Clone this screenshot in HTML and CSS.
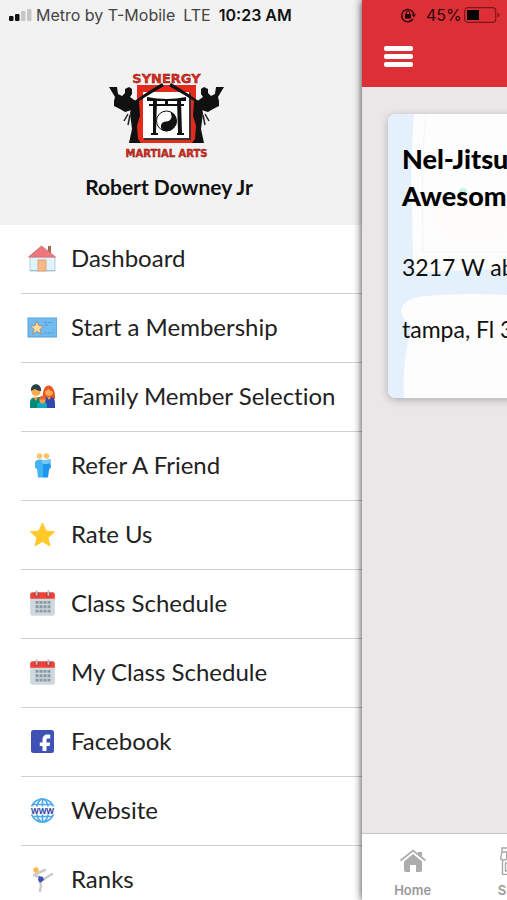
FILE: index.html
```html
<!DOCTYPE html>
<html lang="en">
<head>
<meta charset="utf-8">
<meta name="viewport" content="width=device-width, initial-scale=1">
<title>Synergy Martial Arts</title>
<link rel="stylesheet" href="styles.css">
</head>
<body>
<svg class="defs" width="0" height="0" aria-hidden="true">
  <symbol id="calendar" viewBox="0 0 28 28">
    <path d="M3 9h23v15a2 2 0 0 1-2 2H5a2 2 0 0 1-2-2z" fill="#cfd8dc"/>
    <path d="M5 4h19a2 2 0 0 1 2 2v4H3V6a2 2 0 0 1 2-2z" fill="#ee4338"/>
    <circle cx="9" cy="6" r="2.200" fill="#b62d2a"/><circle cx="20" cy="6" r="2.200" fill="#b62d2a"/>
    <path d="M9 3v3.500M20 3v3.500" stroke="#b6c2c8" stroke-width="2" stroke-linecap="round"/>
    <path d="M8 13.500h14M8 17.500h14M8 21.500h14" stroke="#8799a3" stroke-width="2.600" stroke-dasharray="2.800 .9"/>
  </symbol>
</svg>
<div class="app">
  <aside class="drawer">
    <header class="profile">
      <div class="status">
        <svg class="signal" viewBox="0 0 24 12" aria-hidden="true">
          <rect x="0" y="7" width="4.500" height="5" rx="1" fill="#111"/><rect x="6" y="5" width="4.500" height="7" rx="1" fill="#111"/>
          <rect x="12" y="2" width="4.500" height="10" rx="1" fill="#c6c6c6"/><rect x="18" y="0" width="4.500" height="12" rx="1" fill="#c6c6c6"/>
        </svg>
        <span class="carrier">Metro by T-Mobile</span>
        <span class="network">LTE</span>
        <span class="clock">10:23 AM</span>
      </div>
      <svg class="logo" viewBox="0 0 124 90" role="img" aria-label="Synergy Martial Arts">
        <rect x="33" y="15" width="59" height="58" fill="#e42a1c"/>
        <rect x="40" y="23" width="47" height="47" fill="#333"/>
        <rect x="39" y="22" width="46" height="46" fill="#fff"/>
        <g fill="#111">
          <path d="M43 27q20 4 39 0v4H43zM45 34h35v2H45zM49 30h4l-1 33h2v2h-7v-2h2zM73 30h4l1 33h2v2h-7v-2h1zM61 29h3v6h-3z"/>
          <g id="fighter">
            <path d="M58 13l2 3-17 10-8 5 1 15-3 10 1 13 3 4H25l3-14-2-16 3-11 13-9z"/>
            <path d="M5 17h8l1 7 4 2 3-3 0-4 4-2 3 2v5l-2 3 7 5-5 8-7 2-5-3-6-3 0-5 1-4z"/>
            <path d="M24 44l-4 7M26 45l-2 10" stroke="#222" stroke-width="1.500" fill="none"/>
          </g>
          <use href="#fighter" transform="matrix(-1 0 0 1 125 0)"/>
        </g>
        <circle cx="62.500" cy="51" r="10" fill="#fff" stroke="#111"/>
        <path d="M66 41.500a10 10 0 0 1-7 19c-4-3-2-9 3-9s7-5 4-10z" fill="#111"/>
        <circle cx="66" cy="47" r="1.500" fill="#fff"/><circle cx="59" cy="55" r="1.500" fill="#111"/>
        <text class="logo-text" x="62.500" y="13" text-anchor="middle">SYNERGY</text>
        <text class="logo-text logo-base" x="62.500" y="87" text-anchor="middle">MARTIAL ARTS</text>
      </svg>
      <h1 class="name">Robert Downey Jr</h1>
    </header>
    <nav class="menu">
      <a href="#" class="item"><svg class="icon" viewBox="0 0 30 30" aria-hidden="true">
        <path d="M21 3h3v8h-3z" fill="#a06b53"/><path d="M3 14h25v14H3z" fill="#dff3fb" stroke="#b3d0dc"/><path d="M3 27.500h25" stroke="#9fc1d0"/>
        <path d="M1.500 14L14.500 3 28.500 14z" fill="#ed787c" stroke="#dc7378"/><rect x="11" y="17" width="8" height="11" fill="#f8b886" stroke="#dfa47f"/></svg>Dashboard</a>
      <a href="#" class="item"><svg class="icon" viewBox="0 0 30 30" aria-hidden="true">
        <rect x="1" y="6" width="29" height="19" fill="#70bbf0" stroke="#5a9fd6"/><path d="M10 9l2 4.500 4.500.5-3.500 3.500 1.500 4.500-4.500-2.500L5.500 22 7 17.500 3.500 14l4.500-.5z" fill="#ffdca0" stroke="#a08a80"/>
        <path d="M17 10.500h9M18 13h4M17 21h10" stroke="#5596d2" stroke-dasharray="3 1"/></svg>Start a Membership</a>
      <a href="#" class="item"><svg class="icon" viewBox="0 0 30 30" aria-hidden="true">
        <path d="M16 18c-2-18 13-18 12 0z" fill="#ee5020"/><path d="M3 27v-6q0-4 5-5h5l4 4v7z" fill="#058a76"/><path d="M15 27v-7l4-4h5q4 1 4 6v5z" fill="#3146ae"/>
        <circle cx="9" cy="10.500" r="4.500" fill="#ffa94d"/><path d="M4 10c-1-9 11-9 10 0-4 0-5-2-6-2z" fill="#284047"/><path d="M6 16h5l-2 4zM20 16h4l-2 3z" fill="#ff9e45"/>
        <circle cx="22" cy="11" r="4" fill="#ffad51"/><path d="M17 11c0-8 9-8 10 0-5-1-5-3-5-3z" fill="#ef5525"/>
        <path d="M10 27v-3q0-3 5-3t5 3v3z" fill="#16a8c2"/><circle cx="15.500" cy="19.500" r="3" fill="#ff9f4b"/><path d="M12 18.500c0-5 7-5 7 0z" fill="#e66a2c"/></svg>Family Member Selection</a>
      <a href="#" class="item"><svg class="icon" viewBox="0 0 30 30" aria-hidden="true">
        <circle cx="12.500" cy="6" r="2.800" fill="#ffc469"/><circle cx="19.500" cy="6" r="2.800" fill="#ffc469"/>
        <path d="M10 10q3-1 6 0v17.500h-5l-1-8.500-2-1v-6z" fill="#45b3f2"/><path d="M16 11q4-2 7 0l1 6-2 3-1 7.500h-5z" fill="#1e96ed"/><path d="M15 10q4 1 6-1l3 .5v3q-5 3-9 1z" fill="#74c7f9"/></svg>Refer A Friend</a>
      <a href="#" class="item"><svg class="icon" viewBox="0 0 30 30" aria-hidden="true">
        <path d="M15.500 4l3.500 8 8.500.8-6.500 6 2 8.200-7.500-4.500L8 27l2-8.200-6.500-6 8.500-.8z" fill="#ffca28" stroke="#ffca28" stroke-linejoin="round"/></svg>Rate Us</a>
      <a href="#" class="item"><svg class="icon" aria-hidden="true"><use href="#calendar"/></svg>Class Schedule</a>
      <a href="#" class="item"><svg class="icon" aria-hidden="true"><use href="#calendar"/></svg>My Class Schedule</a>
      <a href="#" class="item"><svg class="icon" viewBox="0 0 30 30" aria-hidden="true">
        <rect x="4" y="4" width="23" height="23" rx="2.500" fill="#3f51b5"/><path d="M23.300 12.500H21c-1.200 0-1.500.5-1.500 1.500v2.500h3.700l-.6 3.500h-3.100v5h-4v-5h-2.700v-3.500h2.700v-3c0-3 1.700-5 5-5 1.500 0 2.200.1 2.800.2z" fill="#fff"/></svg>Facebook</a>
      <a href="#" class="item"><svg class="icon" viewBox="0 0 30 30" aria-hidden="true">
        <g fill="none" stroke="#4ca9e9" stroke-width="1.700"><circle cx="15.500" cy="15.500" r="11.500"/><ellipse cx="15.500" cy="15.500" rx="6" ry="11.500"/><path d="M15.500 4v23M5.500 9.500h20M5.500 21.500h20"/></g>
        <path d="M2 11.500h27v8H2z" fill="#fff"/><text class="www" x="15.500" y="18.500" text-anchor="middle">WWW</text></svg>Website</a>
      <a href="#" class="item"><svg class="icon" viewBox="0 0 30 30" aria-hidden="true">
        <g fill="none" stroke="#cfcacb" stroke-width="2.500" stroke-linecap="round" stroke-linejoin="round"><path d="M12 13l-5-2 11-5M13 16l1 6-1 5M14 17l11-7"/></g>
        <path d="M12 12l4 1 1 3-4 3-2-3z" fill="#3f51b5"/><circle cx="9" cy="6" r="2.700" fill="#ffb74d"/></svg>Ranks</a>
    </nav>
  </aside>
  <main class="page">
    <header class="topbar">
      <div class="power">
        <svg class="lock" viewBox="0 0 16 16" aria-hidden="true"><path d="M13 12a6.200 6.200 0 1 1 1-3" fill="none" stroke="#2e0808" stroke-width="1.400"/><path d="M11.500 7.500h4.500l-2.200 3z" fill="#2e0808"/><rect x="5" y="7" width="6" height="4.500" fill="#1d0303"/><path d="M6.300 7V5.500a1.700 1.700 0 0 1 3.400 0V7" fill="none" stroke="#1d0303"/></svg>
        <span>45%</span>
        <svg class="battery" viewBox="0 0 36 16" aria-hidden="true"><rect x=".7" y=".7" width="31" height="14.600" rx="3" fill="none" stroke="#80171b" stroke-width="1.200"/><rect x="3" y="3" width="12" height="10" fill="#000"/><path d="M33.500 5.500q2 .5 2 2.500t-2 2.500z" fill="#80171b"/></svg>
      </div>
      <button class="burger" type="button" aria-label="Menu"><span></span><span></span><span></span></button>
    </header>
    <section class="content">
      <article class="card">
        <svg class="map" viewBox="0 0 455 284" preserveAspectRatio="xMinYMin slice" aria-hidden="true">
          <rect width="455" height="284" fill="#fdfdfd"/>
          <path d="M0 0h26q-4 50-2 90l1 68q15 0 35-1 30-2 60-2v26q-50-3-90 2-16 4-17 14 3 11 12 15-11 28-9 72H0z" fill="#e4f1fd"/>
          <path d="M38 0q-5 40-3 138h85" fill="none" stroke="#f4f4f4"/><ellipse cx="88" cy="104" rx="42" ry="22" fill="#fefbf9"/><circle cx="75" cy="78" r="4" fill="#c9f2e6"/>
        </svg>
        <div class="card-body">
          <h2>Nel-Jitsu<br>Awesome</h2>
          <p>3217 W ab</p>
          <p>tampa, Fl 3</p>
        </div>
      </article>
    </section>
    <nav class="tabs">
      <a href="#" class="tab"><svg viewBox="0 0 28 28" aria-hidden="true"><path d="M5 14.500L14 7l9 7.500V23q0 2-2 2h-4v-7h-6v7H7q-2 0-2-2z" fill="#acacac"/><path d="M1.500 13.500L14 3.500l12.500 10" fill="none" stroke="#acacac" stroke-width="1.700"/><path d="M19 5h4v5l-4-3z" fill="#acacac"/></svg>Home</a>
      <a href="#" class="tab"><svg viewBox="0 0 28 28" aria-hidden="true"><g fill="none" stroke="#a8a8a8" stroke-width="1.400"><path d="M2 1h26v4H2zM2 5L.7 11q0 2 3 2t3-2V5M6.700 11q0 2 4 2t4-2V5M2.500 13v14.500H28M5.500 16h9v8h-9z"/></g></svg>Shop</a>
    </nav>
  </main>
</div>
</body>
</html>
```
FILE: styles.css
```css
* { box-sizing: border-box; }
body {
  margin: 0;
  font-family: Lato, "Open Sans", sans-serif;
  font-variant-ligatures: none;
  color: #222;
  background: #e9e7e8;
}
h1, h2, p { margin: 0; }
a { color: inherit; text-decoration: none; }
.defs { display: none; }
.app { display: flex; height: 100vh; overflow: hidden; }

.drawer {
  flex: 0 0 71.4%;
  overflow: hidden;
  background: #fff;
}
.profile {
  display: flex;
  flex-direction: column;
  align-items: center;
  height: 225px;
  background: #f2f2f2;
}
.status {
  display: flex;
  align-items: center;
  align-self: stretch;
  height: 30px;
  padding-left: 9px;
  font: 16px Inter, "Liberation Sans", sans-serif;
  color: #444;
  white-space: nowrap;
}
.signal { width: 24px; height: 12px; margin-right: 3px; }
.network { margin-left: 8px; }
.clock { margin-left: 8px; font-weight: 600; color: #111; }
.logo { width: 124px; height: 90px; margin-top: 40px; margin-left: -30px; }
.logo-text {
  font: bold 13px "DejaVu Sans", sans-serif;
  fill: #e42a1c;
  stroke: #6b1610;
  stroke-width: .4px;
}
.logo-base { font-size: 10px; }
.www { font: bold 8px "Open Sans", sans-serif; fill: #303f9f; }
.name {
  margin-top: 15px;
  margin-left: -24px;
  font-size: 21px;
  line-height: 24px;
  font-weight: 700;
  color: #111;
}

.menu { padding-left: 21px; }
.item {
  display: flex;
  align-items: center;
  gap: 14px;
  height: 69px;
  padding-left: 6px;
  padding-bottom: 2px;
  border-bottom: 1px solid #cfcfcf;
  font-size: 24px;
  line-height: 32px;
  white-space: nowrap;
}
.icon { flex: none; width: 30px; height: 30px; }

.page {
  position: relative;
  display: flex;
  flex-direction: column;
  flex: 0 0 100%;
  background: #e9e7e8;
  box-shadow: 0 0 8px rgba(0, 0, 0, .8);
}
.topbar {
  height: 87px;
  background: #dd3036;
}
.power {
  display: flex;
  align-items: center;
  height: 30px;
  padding-left: 38px;
  gap: 10px;
  font: 16px Inter, "Liberation Sans", sans-serif;
  color: #2e0808;
}
.lock { width: 16px; height: 16px; }
.battery { width: 36px; height: 16px; margin-left: -8px; }
.burger {
  display: flex;
  flex-direction: column;
  gap: 3px;
  margin: 16px 0 0 22px;
  padding: 0;
  border: 0;
  background: none;
}
.burger span { width: 29px; height: 5px; border-radius: 2px; background: #fff; }
.content { flex: 1; padding: 27px 26px; }
.card {
  position: relative;
  height: 284px;
  overflow: hidden;
  border-radius: 8px;
  box-shadow: 0 2px 8px rgba(0, 0, 0, .25);
}
.map { position: absolute; inset: 0; width: 100%; height: 100%; }
.card-body {
  position: relative;
  padding: 26px 14px;
  color: #111;
}
.card h2 {
  margin-bottom: 37px;
  font-size: 27px;
  line-height: 37px;
  font-weight: 900;
  color: #000;
}
.card p { margin-bottom: 30px; font-size: 23px; line-height: 32px; }
.tabs {
  display: grid;
  grid-template-columns: repeat(5, 1fr);
  height: 67px;
  border-top: 1px solid #c4c4c4;
  background: #fff;
}
.tab {
  display: flex;
  flex-direction: column;
  align-items: center;
  gap: 6px;
  padding-top: 13px;
  font: 600 13px/18px Inter, "Liberation Sans", sans-serif;
  color: #999;
}
.tab svg { width: 28px; height: 28px; }
```
